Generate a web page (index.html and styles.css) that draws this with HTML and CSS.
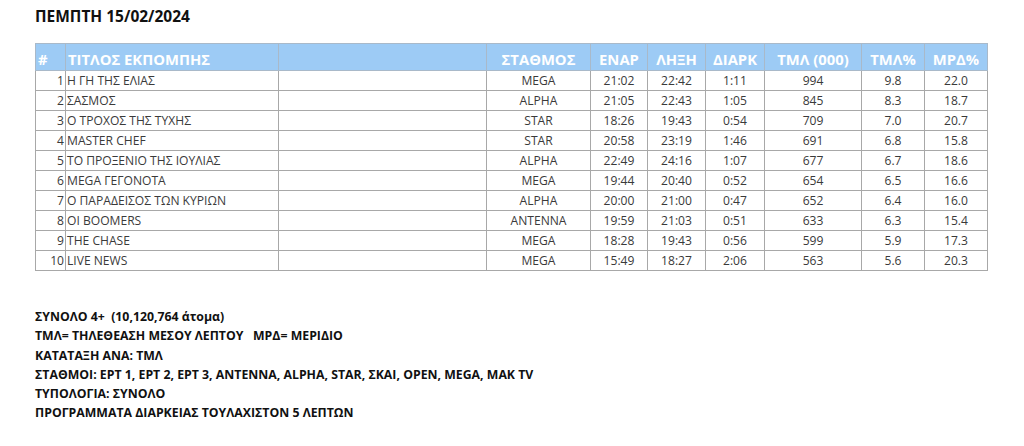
FILE: index.html
```html
<!DOCTYPE html>
<html lang="el">
<head>
<meta charset="utf-8">
<link rel="stylesheet" href="styles.css">
</head>
<body>
<div class="page">
  <h1 class="date">ΠΕΜΠΤΗ 15/02/2024</h1>
  <table class="ratings">
    <colgroup>
      <col class="c-num"><col class="c-title"><col class="c-gap"><col class="c-station">
      <col class="c-start"><col class="c-end"><col class="c-dur"><col class="c-tml">
      <col class="c-tmlp"><col class="c-mrd">
    </colgroup>
    <thead>
      <tr>
        <th class="left">#</th>
        <th class="left">ΤΙΤΛΟΣ ΕΚΠΟΜΠΗΣ</th>
        <th></th>
        <th>ΣΤΑΘΜΟΣ</th>
        <th>ΕΝΑΡ</th>
        <th>ΛΗΞΗ</th>
        <th>ΔΙΑΡΚ</th>
        <th>ΤΜΛ (000)</th>
        <th>ΤΜΛ%</th>
        <th>ΜΡΔ%</th>
      </tr>
    </thead>
    <tbody>
      <tr><td class="num">1</td><td class="title">Η ΓΗ ΤΗΣ ΕΛΙΑΣ</td><td></td><td>MEGA</td><td>21:02</td><td>22:42</td><td>1:11</td><td>994</td><td>9.8</td><td>22.0</td></tr>
      <tr><td class="num">2</td><td class="title">ΣΑΣΜΟΣ</td><td></td><td>ALPHA</td><td>21:05</td><td>22:43</td><td>1:05</td><td>845</td><td>8.3</td><td>18.7</td></tr>
      <tr><td class="num">3</td><td class="title">Ο ΤΡΟΧΟΣ ΤΗΣ ΤΥΧΗΣ</td><td></td><td>STAR</td><td>18:26</td><td>19:43</td><td>0:54</td><td>709</td><td>7.0</td><td>20.7</td></tr>
      <tr><td class="num">4</td><td class="title">MASTER CHEF</td><td></td><td>STAR</td><td>20:58</td><td>23:19</td><td>1:46</td><td>691</td><td>6.8</td><td>15.8</td></tr>
      <tr><td class="num">5</td><td class="title">ΤΟ ΠΡΟΞΕΝΙΟ ΤΗΣ ΙΟΥΛΙΑΣ</td><td></td><td>ALPHA</td><td>22:49</td><td>24:16</td><td>1:07</td><td>677</td><td>6.7</td><td>18.6</td></tr>
      <tr><td class="num">6</td><td class="title">MEGA ΓΕΓΟΝΟΤΑ</td><td></td><td>MEGA</td><td>19:44</td><td>20:40</td><td>0:52</td><td>654</td><td>6.5</td><td>16.6</td></tr>
      <tr><td class="num">7</td><td class="title">Ο ΠΑΡΑΔΕΙΣΟΣ ΤΩΝ ΚΥΡΙΩΝ</td><td></td><td>ALPHA</td><td>20:00</td><td>21:00</td><td>0:47</td><td>652</td><td>6.4</td><td>16.0</td></tr>
      <tr><td class="num">8</td><td class="title">OI BOOMERS</td><td></td><td>ANTENNA</td><td>19:59</td><td>21:03</td><td>0:51</td><td>633</td><td>6.3</td><td>15.4</td></tr>
      <tr><td class="num">9</td><td class="title">THE CHASE</td><td></td><td>MEGA</td><td>18:28</td><td>19:43</td><td>0:56</td><td>599</td><td>5.9</td><td>17.3</td></tr>
      <tr><td class="num">10</td><td class="title">LIVE NEWS</td><td></td><td>MEGA</td><td>15:49</td><td>18:27</td><td>2:06</td><td>563</td><td>5.6</td><td>20.3</td></tr>
    </tbody>
  </table>
  <div class="notes">
    <p>ΣΥΝΟΛΟ 4+ &nbsp;(10,120,764 άτομα)</p>
    <p>ΤΜΛ= ΤΗΛΕΘΕΑΣΗ ΜΕΣΟΥ ΛΕΠΤΟΥ &nbsp;&nbsp;ΜΡΔ= ΜΕΡΙΔΙΟ</p>
    <p>ΚΑΤΑΤΑΞΗ ΑΝΑ: ΤΜΛ</p>
    <p>ΣΤΑΘΜΟΙ: ΕΡΤ 1, ΕΡΤ 2, ΕΡΤ 3, ANTENNA, ALPHA, STAR, ΣΚΑΙ, OPEN, MEGA, MAK TV</p>
    <p>ΤΥΠΟΛΟΓΙΑ: ΣΥΝΟΛΟ</p>
    <p>ΠΡΟΓΡΑΜΜΑΤΑ ΔΙΑΡΚΕΙΑΣ ΤΟΥΛΑΧΙΣΤΟΝ 5 ΛΕΠΤΩΝ</p>
  </div>
</div>
</body>
</html>
```
FILE: styles.css
```css
html, body {
  margin: 0;
  padding: 0;
  background: #ffffff;
}

.page {
  padding: 6px 0 0 35px;
  font-family: "Open Sans", "Noto Sans", "Liberation Sans", sans-serif;
  color: #1a1a1a;
}

.date {
  margin: 0;
  font-size: 15.5px;
  font-weight: 700;
  line-height: 20px;
  color: #111;
}

.ratings {
  margin-top: 17px;
  border-collapse: collapse;
  table-layout: fixed;
  width: 952px;
  font-size: 12.1px;
  color: #3a3a3a;
}

.c-num { width: 30px; }
.c-title { width: 213px; }
.c-gap { width: 208px; }
.c-station { width: 104px; }
.c-start { width: 57px; }
.c-end { width: 58px; }
.c-dur { width: 59px; }
.c-tml { width: 97px; }
.c-tmlp { width: 63px; }
.c-mrd { width: 63px; }

.ratings th {
  background: #9dcbf5;
  color: #ffffff;
  font-size: 14.8px;
  font-weight: 700;
  height: 26px;
  padding: 0 1px;
  text-align: center;
  vertical-align: bottom;
  line-height: 21px;
  border: 1px solid #a9b9c9;
  white-space: nowrap;
  overflow: hidden;
}

.ratings th.left {
  text-align: left;
  padding-left: 2px;
}

.ratings td {
  height: 19px;
  padding: 0 2px;
  text-align: center;
  line-height: 19px;
  border: 1px solid #a8a8a8;
  white-space: nowrap;
  overflow: hidden;
}

.ratings td.num {
  text-align: right;
  padding-right: 1px;
}

.ratings td.title {
  text-align: left;
  padding-left: 1px;
}

.notes {
  margin-top: 36px;
  font-size: 12.3px;
  font-weight: 700;
  color: #111;
}

.notes p {
  margin: 0;
  line-height: 19.3px;
}
```
